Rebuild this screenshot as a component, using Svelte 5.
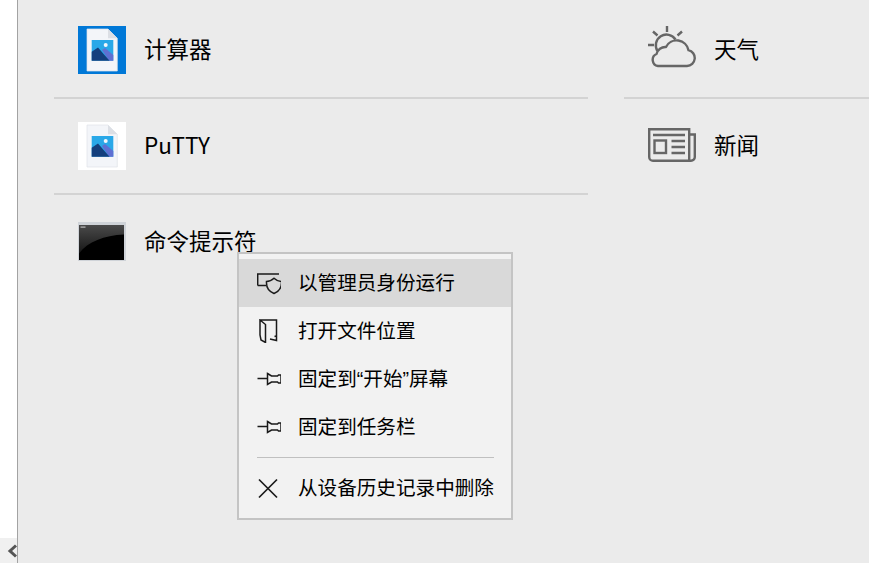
<script>
  const leftTiles = [
    { name: '计算器', icon: 'calc' },
    { name: 'PuTTY', icon: 'putty' },
    { name: '命令提示符', icon: 'cmd' },
  ];
  const rightTiles = [
    { name: '天气', icon: 'weather' },
    { name: '新闻', icon: 'news' },
  ];
  const menu = [
    { label: '以管理员身份运行', icon: 'shield', active: true },
    { label: '打开文件位置', icon: 'folder' },
    { label: '固定到“开始”屏幕', icon: 'pin' },
    { label: '固定到任务栏', icon: 'pin' },
    { sep: true },
    { label: '从设备历史记录中删除', icon: 'close' },
  ];
</script>

{#snippet fileIcon()}
  <svg viewBox="0 0 48 48" width="48" height="48">
    <path d="M9 3h21l9.300 9.300V45H9z" fill="#f3f5f9" stroke="#dfe2e8" stroke-width="0.7" />
    <path d="M30 3l9.300 9.300H30z" fill="#dcdfe5" />
    <rect x="13.700" y="14" width="21.600" height="20.700" fill="#29a8e8" />
    <circle cx="27.700" cy="19" r="2" fill="#f4f8fc" />
    <path d="M24 24l3-2 8.300 7v5.700H31z" fill="#5f70d2" />
    <path d="M13.700 34.700v-9L20 21.500l11.500 13.200z" fill="#143f7d" />
  </svg>
{/snippet}

{#snippet tileIcon(name)}
  {#if name === 'calc'}
    <span class="plate blue">{@render fileIcon()}</span>
  {:else if name === 'putty'}
    <span class="plate white">{@render fileIcon()}</span>
  {:else if name === 'cmd'}
    <span class="plate">
      <svg viewBox="0 0 48 48" width="48" height="48">
        <defs>
          <linearGradient id="cmd-glow" x1="0" y1="0" x2="0" y2="1">
            <stop offset="0" stop-color="#4a4a4a" />
            <stop offset="1" stop-color="#161616" />
          </linearGradient>
        </defs>
        <rect x="0" y="4" width="48" height="39" fill="#cfd3d8" />
        <rect x="1" y="7" width="45" height="35" fill="#000" />
        <path d="M1 7h45v9.500c-20 1-36 7-45 19z" fill="url(#cmd-glow)" />
        <rect x="2.500" y="8.500" width="5" height="1.200" fill="#bbb" />
      </svg>
    </span>
  {:else if name === 'weather'}
    <span class="plate">
      <svg viewBox="0 0 48 48" width="48" height="48" fill="none" stroke="#666" stroke-width="2.400">
        <path d="M10 40h29a8 8 0 0 0 1.500-15.800 12 12 0 0 0-22.500-3.200 9 9 0 0 0-9.500 7A6.300 6.300 0 0 0 10 40z" stroke-linejoin="round" />
        <path d="M9.500 25A10 10 0 0 1 27.500 13.500" />
        <path d="M19 0v6M5 5.500l4.500 4M34 5.500l-4.500 4M0 19h6" />
      </svg>
    </span>
  {:else}
    <span class="plate">
      <svg viewBox="0 0 48 48" width="48" height="48" fill="none" stroke="#666" stroke-width="2.400">
        <path d="M1.200 7.200h40v31.600H5a3.800 3.800 0 0 1-3.800-3.800z" />
        <path d="M41 12.500h5.800V35a3.800 3.800 0 0 1-3.800 3.800h-2" />
        <rect x="6.500" y="18.500" width="11.500" height="12.500" />
        <path d="M5 13h32M23.500 19H37M23.500 25H37M23.500 31H37" />
      </svg>
    </span>
  {/if}
{/snippet}

{#snippet menuIcon(name)}
  <svg viewBox="0 0 24 24" width="24" height="24" fill="none" stroke="#1a1a1a" stroke-width="1.500">
    {#if name === 'shield'}
      <path d="M.7 14.500V3H22M.7 14.500H9" />
      <path d="M9.500 10.500c3 0 5.500-1.300 7.500-3.200 2 1.900 4.500 3.200 7.500 3.200 .4 5.500-2 9.700-7.500 12-5.500-2.300-7.900-6.500-7.500-12z" />
    {:else if name === 'folder'}
      <path d="M3 1h16.500v20.500L13 20M3 1l5.500 4.500v18L4 21l-1-5z" />
      <path d="M19.500 17l-2 .5" />
    {:else if name === 'pin'}
      <path d="M.5 11.500h10M10.500 6.500l4 2.500h6l1-1H24v8h-2.500l-1-1h-6l-4 2.500z" />
    {:else}
      <path d="M2 3.500l18 18M20 3.500l-18 18" stroke-width="1.700" />
    {/if}
  </svg>
{/snippet}

<div class="screen">
  <aside class="gutter">
    <div class="gutter-fill"></div>
    <button class="collapse" aria-label="Collapse">
      <svg viewBox="0 0 10 14" width="10" height="14"><path d="M9 1.500L3 7l6 5.500" fill="none" stroke="#555" stroke-width="3" /></svg>
    </button>
  </aside>

  <main class="content">
    <section class="col left">
      {#each leftTiles as tile}
        <div class="tile">
          {@render tileIcon(tile.icon)}
          <span class="name">{tile.name}</span>
        </div>
      {/each}
    </section>
    <section class="col right">
      {#each rightTiles as tile}
        <div class="tile">
          {@render tileIcon(tile.icon)}
          <span class="name">{tile.name}</span>
        </div>
      {/each}
    </section>

    <div class="menu" role="menu">
      {#each menu as item}
        {#if item.sep}
          <div class="sep"></div>
        {:else}
          <div class="item" class:active={item.active} role="menuitem">
            <span class="item-icon">{@render menuIcon(item.icon)}</span>
            <span class="item-label">{item.label}</span>
          </div>
        {/if}
      {/each}
    </div>
  </main>
</div>

<style>
  :global(body) {
    margin: 0;
    overflow: hidden;
  }

  .screen {
    display: flex;
    width: 869px;
    height: 563px;
    overflow: hidden;
    background: #ebebeb;
    font-family: "Noto Sans CJK SC", "Noto Sans", sans-serif;
    color: #000;
  }

  .gutter {
    display: flex;
    flex-direction: column;
    width: 17px;
    flex: none;
    border-right: 1px solid #a3a3a3;
  }

  .gutter-fill {
    flex: 1;
    background: #fff;
  }

  .collapse {
    display: flex;
    align-items: center;
    justify-content: center;
    height: 25px;
    padding: 0 0 0 6px;
    border: 0;
    background: #f0f0f0;
  }

  .content {
    position: relative;
    display: flex;
    flex: 1;
    gap: 36px;
    padding: 3px 0 0 36px;
  }

  .col.left {
    width: 534px;
  }

  .col.right {
    flex: 1;
  }

  .tile {
    display: flex;
    align-items: center;
    gap: 18px;
    box-sizing: border-box;
    height: 96px;
    padding-left: 24px;
    border-bottom: 2px solid #d3d3d3;
  }

  .tile:last-child {
    border-bottom-color: transparent;
  }

  .plate {
    display: block;
    width: 48px;
    height: 48px;
  }

  .plate svg {
    display: block;
  }

  .blue {
    background: #0078d7;
  }

  .white {
    background: #fff;
  }

  .name {
    padding-bottom: 4px;
    font-size: 22.500px;
    line-height: 30px;
  }

  .menu {
    position: absolute;
    left: 219px;
    top: 252px;
    box-sizing: border-box;
    width: 276px;
    height: 268px;
    padding: 5px 0;
    border: 2px solid #c4c4c4;
    background: #f2f2f2;
  }

  .item {
    display: flex;
    align-items: center;
    height: 48px;
    padding-left: 18px;
    white-space: nowrap;
  }

  .item.active {
    background: #d9d9d9;
  }

  .item-icon {
    display: flex;
    width: 41px;
    flex: none;
  }

  .item-label {
    padding-bottom: 3px;
    font-family: "Liberation Sans", "Noto Sans CJK SC", sans-serif;
    font-size: 19.600px;
  }

  .sep {
    height: 1px;
    margin: 6px 17px 6px 18px;
    background: #c0c0c0;
  }
</style>
